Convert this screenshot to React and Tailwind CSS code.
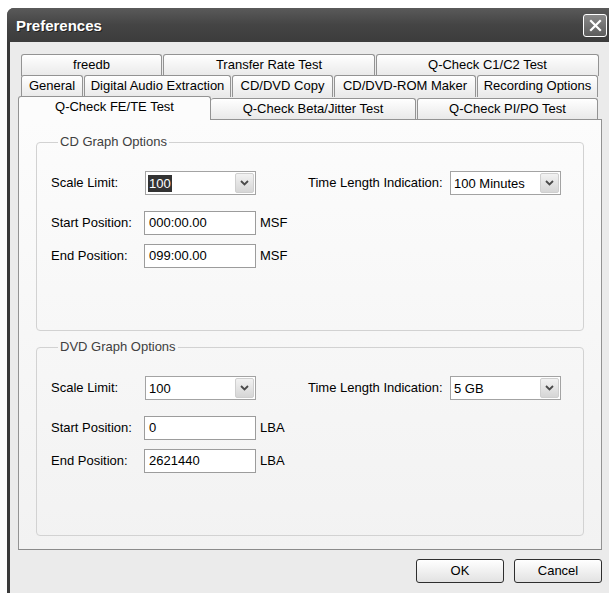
import React from "react";

// back rows of the tab strip, widths in px
const rowOne = [
  { label: "freedb", w: 141 },
  { label: "Transfer Rate Test", w: 212 },
  { label: "Q-Check C1/C2 Test", w: 223 },
];

const rowTwo = [
  { label: "General", w: 62 },
  { label: "Digital Audio Extraction", w: 147 },
  { label: "CD/DVD Copy", w: 101 },
  { label: "CD/DVD-ROM Maker", w: 142 },
  { label: "Recording Options", w: 121 },
];

function Tab({ label, w }) {
  return (
    <div
      style={{ width: w }}
      className="h-[22px] shrink-0 rounded-t-[3px] border border-b-0 border-[#939393] bg-gradient-to-b from-white to-[#e9e9e9] flex items-center justify-center text-black leading-none pb-[2px] whitespace-nowrap"
    >
      {label}
    </div>
  );
}

function Chevron() {
  return (
    <svg width="9" height="6" viewBox="0 0 9 6">
      <path d="M1 1 L4.5 4.5 L8 1" fill="none" stroke="#4a4a4a" strokeWidth="1.8" />
    </svg>
  );
}

function Combo({ value, selected, width = 111 }) {
  return (
    <div
      style={{ width }}
      className="h-[24px] border border-[#a3a3a3] bg-white flex items-center pl-[2px] pr-[1px] shrink-0"
    >
      <span
        className={
          selected
            ? "bg-[#333333] text-white px-[1px] leading-[17px]"
            : "text-black px-[1px] leading-[17px]"
        }
      >
        {value}
      </span>
      <div className="ml-auto w-[19px] h-[20px] rounded-[2px] border border-[#cfcfcf] bg-gradient-to-b from-[#f2f2f2] to-[#d6d6d6] flex items-center justify-center">
        <Chevron />
      </div>
    </div>
  );
}

function TextBox({ value }) {
  return (
    <div className="w-[112px] h-[24px] border border-[#9c9c9c] bg-white flex items-center pl-[4px] text-black shrink-0">
      {value}
    </div>
  );
}

function GraphGroup({ title, scale, selected, length, start, end, unit, className }) {
  return (
    <fieldset
      className={
        "mx-[17px] h-[196px] rounded-[4px] border border-[#d2d2d2] pl-[14px] " + className
      }
    >
      <legend className="ml-[7px] px-[2px] text-[#404040] leading-[14px]">{title}</legend>
      <div className="mt-[22px] flex items-center">
        <span className="w-[94px] text-black">Scale Limit:</span>
        <Combo value={scale} selected={selected} />
        <span className="ml-[52px] w-[142px] text-black whitespace-nowrap">Time Length Indication:</span>
        <Combo value={length} />
      </div>
      <div className="mt-[16px] flex items-center">
        <span className="w-[93px] text-black">Start Position:</span>
        <TextBox value={start} />
        <span className="ml-[4px] text-black">{unit}</span>
      </div>
      <div className="mt-[9px] flex items-center">
        <span className="w-[93px] text-black">End Position:</span>
        <TextBox value={end} />
        <span className="ml-[4px] text-black">{unit}</span>
      </div>
    </fieldset>
  );
}

export default function App() {
  return (
    <div className="w-[609px] h-[593px] bg-white overflow-hidden font-['Liberation_Sans',Arial,sans-serif] text-[13px]">
      {/* window frame */}
      <div className="ml-[7px] mt-[8px] w-[608px] h-[600px] rounded-t-[7px] bg-[#3a3a3a] px-[3px] flex flex-col">
        {/* title bar */}
        <div className="h-[34px] shrink-0 flex items-center pl-[6px] pr-[6px] bg-gradient-to-b from-[#5a5a5a] via-[#444444] to-[#3c3c3c] -mx-[3px] rounded-t-[7px]">
          <span className="text-white font-bold text-[15px] pt-[2px] ml-[3px] [text-shadow:1px_1px_0_#222]">
            Preferences
          </span>
          <div className="ml-auto w-[24px] h-[23px] rounded-[3px] border border-white bg-gradient-to-b from-[#8a8a8a] to-[#5c5c5c] flex items-center justify-center mr-[2px]">
            <svg width="13" height="13" viewBox="0 0 13 13">
              <path d="M2 2 L11 11 M11 2 L2 11" stroke="white" strokeWidth="2.2" strokeLinecap="square" />
            </svg>
          </div>
        </div>

        {/* client area */}
        <div className="flex-1 bg-[#ebebeb] pt-[12px] pl-[8px]">
          <div className="w-[584px]">
            {/* tab strip */}
            <div className="flex gap-[1px] pl-[3px]">
              {rowOne.map((t) => (
                <Tab key={t.label} {...t} />
              ))}
            </div>
            <div className="flex gap-[1px] pl-[3px] -mt-[1px]">
              {rowTwo.map((t) => (
                <Tab key={t.label} {...t} />
              ))}
            </div>
            <div className="flex items-end h-[23px] relative z-10 -mt-[1px]">
              <div className="w-[193px] h-[24px] rounded-t-[3px] border border-b-0 border-[#939393] bg-[#fcfcfc] flex items-center justify-center pb-[3px] -mb-[1px] text-black">
                Q-Check FE/TE Test
              </div>
              <div className="w-[205px] h-[21px] rounded-t-[3px] border border-b-0 border-l-0 border-[#939393] bg-gradient-to-b from-white to-[#e9e9e9] flex items-center justify-center text-black pb-[1px]">
                Q-Check Beta/Jitter Test
              </div>
              <div className="ml-[1px] w-[181px] h-[21px] rounded-t-[3px] border border-b-0 border-[#939393] bg-gradient-to-b from-white to-[#e9e9e9] flex items-center justify-center text-black pb-[1px]">
                Q-Check PI/PO Test
              </div>
            </div>

            {/* tab page */}
            <div className="h-[431px] border border-[#939393] border-b-[#8a8a8a] bg-gradient-to-b from-[#fcfcfc] to-[#f2f2f2] pt-[15px]">
              <GraphGroup
                title="CD Graph Options"
                scale="100"
                selected
                length="100 Minutes"
                start="000:00.00"
                end="099:00.00"
                unit="MSF"
              />
              <GraphGroup
                title="DVD Graph Options"
                scale="100"
                length="5 GB"
                start="0"
                end="2621440"
                unit="LBA"
                className="mt-[9px]"
              />
            </div>

            {/* dialog buttons */}
            <div className="flex justify-end gap-[10px] mt-[9px]">
              <button className="w-[88px] h-[24px] rounded-[3px] border border-[#2e2e2e] bg-gradient-to-b from-white to-[#e2e2e2] text-black">
                OK
              </button>
              <button className="w-[88px] h-[24px] rounded-[3px] border border-[#2e2e2e] bg-gradient-to-b from-white to-[#e2e2e2] text-black">
                Cancel
              </button>
            </div>
          </div>
        </div>
      </div>
    </div>
  );
}
